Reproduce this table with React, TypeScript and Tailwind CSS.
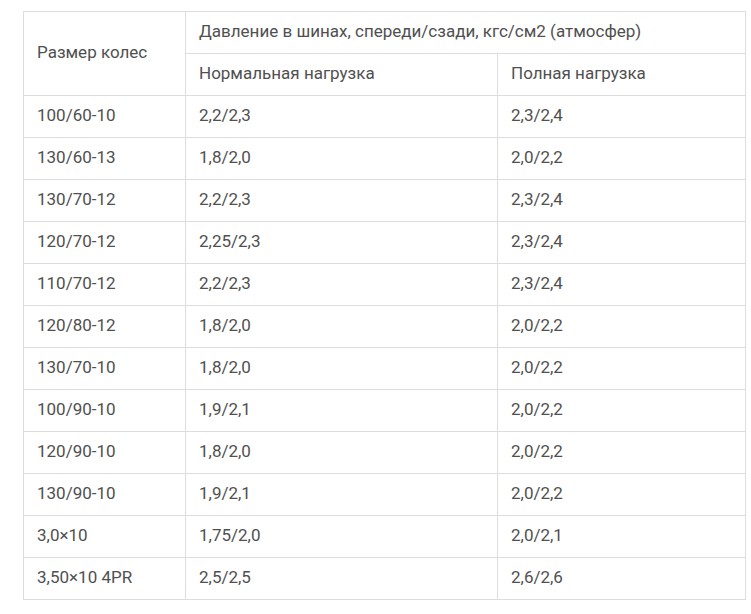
const rows: [string, string, string][] = [
  ["100/60-10", "2,2/2,3", "2,3/2,4"],
  ["130/60-13", "1,8/2,0", "2,0/2,2"],
  ["130/70-12", "2,2/2,3", "2,3/2,4"],
  ["120/70-12", "2,25/2,3", "2,3/2,4"],
  ["110/70-12", "2,2/2,3", "2,3/2,4"],
  ["120/80-12", "1,8/2,0", "2,0/2,2"],
  ["130/70-10", "1,8/2,0", "2,0/2,2"],
  ["100/90-10", "1,9/2,1", "2,0/2,2"],
  ["120/90-10", "1,8/2,0", "2,0/2,2"],
  ["130/90-10", "1,9/2,1", "2,0/2,2"],
  ["3,0×10", "1,75/2,0", "2,0/2,1"],
  ["3,50×10 4PR", "2,5/2,5", "2,6/2,6"],
];

const cell =
  "border border-[#dddddd] pl-[13px] pr-3 pb-[3px] h-[42px] text-left font-normal align-middle";

export default function App() {
  return (
    <div
      className="w-[751px] h-[614px] bg-white pt-[11px] pl-[23px]"
      style={{ fontFamily: "Roboto, 'Noto Sans', sans-serif" }}
    >
      <table className="border-collapse table-fixed w-[722px] text-[17px] leading-5 text-[#505050]">
        <colgroup>
          <col className="w-[162px]" />
          <col className="w-[312px]" />
          <col className="w-[248px]" />
        </colgroup>
        <thead>
          <tr>
            <th rowSpan={2} className={cell}>
              Размер колес
            </th>
            <th colSpan={2} className={cell}>
              Давление в шинах, спереди/сзади, кгс/см2 (атмосфер)
            </th>
          </tr>
          <tr>
            <th className={cell}>Нормальная нагрузка</th>
            <th className={cell}>Полная нагрузка</th>
          </tr>
        </thead>
        <tbody>
          {rows.map((r) => (
            <tr key={r[0]}>
              <td className={cell}>{r[0]}</td>
              <td className={cell}>{r[1]}</td>
              <td className={cell}>{r[2]}</td>
            </tr>
          ))}
        </tbody>
      </table>
    </div>
  );
}
